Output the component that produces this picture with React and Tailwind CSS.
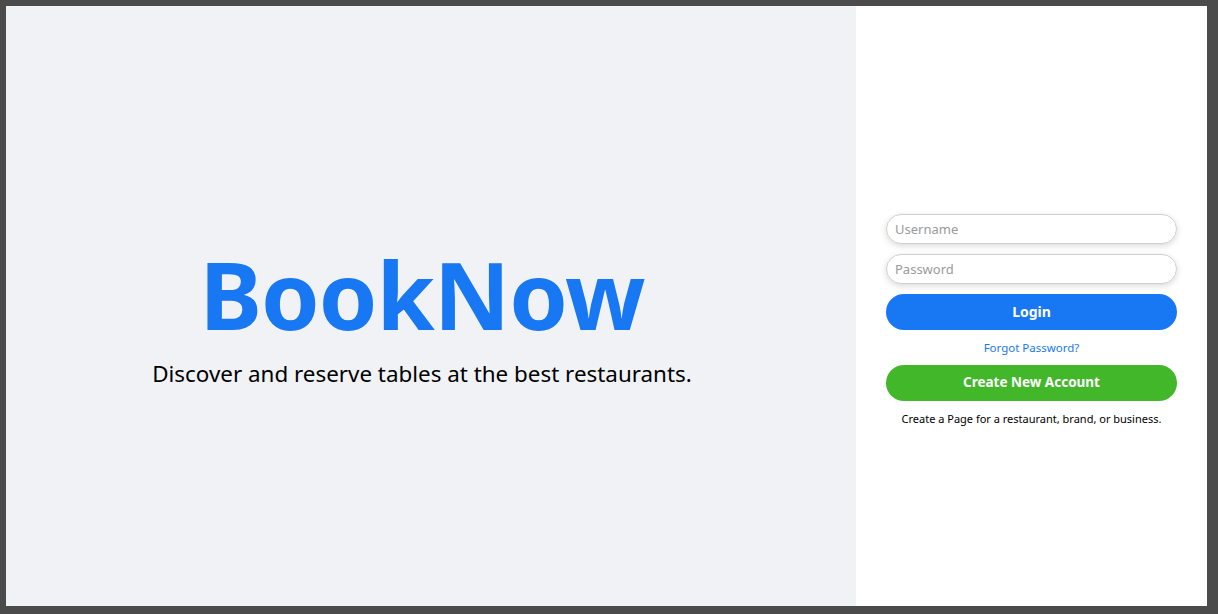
export default function App() {
  return (
    <div
      className="flex h-[614px] w-full bg-[#4b4b4b] pt-[6px] pl-[6px] pr-[11px] pb-[8px]"
      style={{ fontFamily: '"Noto Sans", "Open Sans", sans-serif' }}
    >
      <div className="flex flex-1 flex-col items-center justify-center bg-[#f0f2f5] pt-[7px] pr-[18px]">
        <h1 className="text-[94px] font-bold leading-[128px] tracking-[-1px] text-[#1877f2]">BookNow</h1>
        <p className="text-[22.4px] leading-[31px] text-black">
          Discover and reserve tables at the best restaurants.
        </p>
      </div>
      <div className="flex w-[351px] flex-col justify-center bg-white px-[30px] pt-[28px]">
        <input
          type="text"
          placeholder="Username"
          className="h-[30px] w-full rounded-full border border-[#cfcfcf] px-[8px] text-[13px] text-black shadow-[0_2px_6px_rgba(0,0,0,0.15)] outline-none placeholder:text-[#9a9a9a]"
        />
        <input
          type="password"
          placeholder="Password"
          className="mt-[10px] h-[30px] w-full rounded-full border border-[#cfcfcf] px-[8px] text-[13px] text-black shadow-[0_2px_6px_rgba(0,0,0,0.15)] outline-none placeholder:text-[#9a9a9a]"
        />
        <button className="mt-[10px] h-[36px] w-full rounded-full bg-[#1877f2] text-[14px] font-bold text-white">
          Login
        </button>
        <a className="mt-[10px] text-center text-[11.5px] leading-[16px] text-[#1877f2]" href="#">
          Forgot Password?
        </a>
        <button className="mt-[9px] h-[36px] w-full rounded-full bg-[#42b72a] text-[13.5px] font-bold text-white">
          Create New Account
        </button>
        <p className="mt-[10px] text-center text-[11px] leading-[16px] text-black">
          Create a Page for a restaurant, brand, or business.
        </p>
      </div>
    </div>
  );
}
